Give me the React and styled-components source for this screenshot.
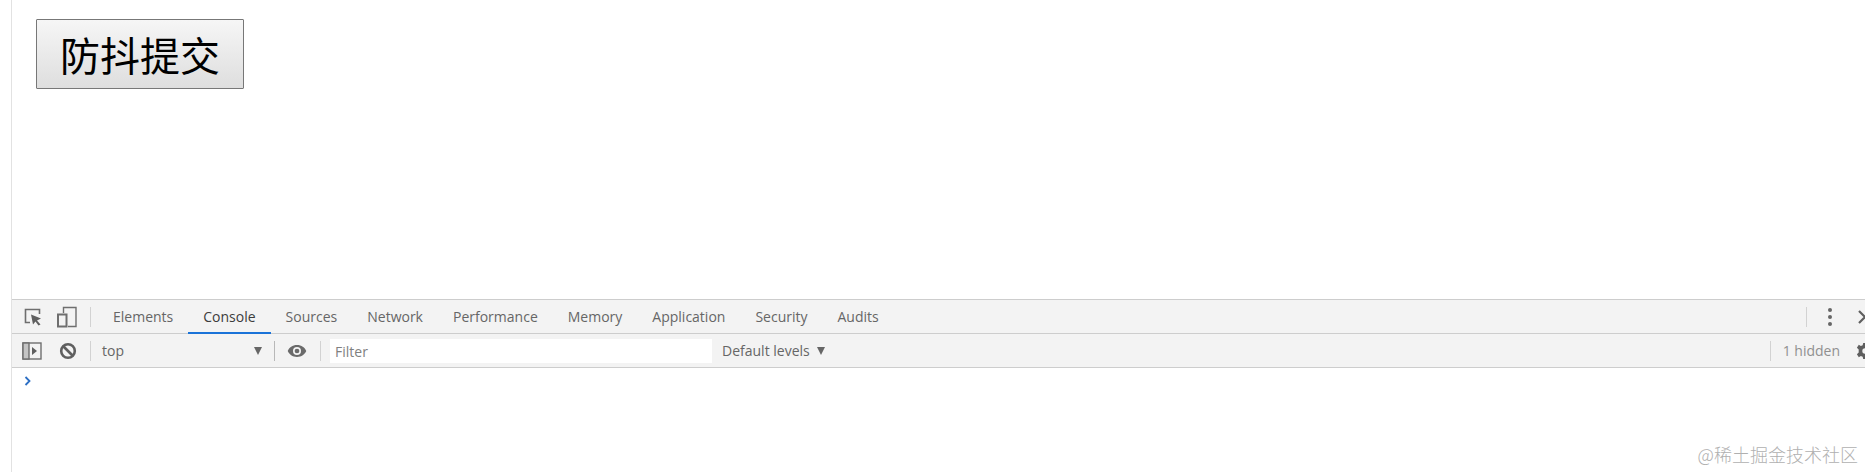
import React from 'react';
import styled, { createGlobalStyle } from 'styled-components';

const GlobalStyle = createGlobalStyle`
	html, body {
		margin: 0;
		padding: 0;
		background: #fff;
		overflow: hidden;
	}
	* {
		box-sizing: border-box;
	}
	svg {
		flex-shrink: 0;
	}
`;

const TABS = ['Elements', 'Console', 'Sources', 'Network', 'Performance', 'Memory', 'Application', 'Security', 'Audits'];

const App = () => {
	return (
		<Window>
			<GlobalStyle />
			<Gutter />
			<Main>
				<Viewport>
					<DebounceButton>防抖提交</DebounceButton>
				</Viewport>
				<TabBar>
					<IconSlot $width={38} $ml={2}>
						<svg width="20" height="20" viewBox="0 0 20 20" fill="none">
							<path d="M7 15.5H2.5V2.5H16.5V7" stroke="#6e6e6e" strokeWidth="1.6" />
							<path d="M8 7.5L18 11.5L14 13.5L17.5 17.5L15.5 18.5L12.5 14.5L10 17.5Z" fill="#5f5f5f" />
						</svg>
					</IconSlot>
					<IconSlot $width={30}>
						<svg width="22" height="22" viewBox="0 0 22 22" fill="none">
							<path d="M7.5 7V1.5H20V20.5H12" stroke="#6e6e6e" strokeWidth="1.4" />
							<rect x="2" y="8.5" width="8.5" height="12" stroke="#6e6e6e" strokeWidth="2" />
						</svg>
					</IconSlot>
					<Divider $ml={8} $mr={7} />
					{TABS.map((tab) => (
						<Tab key={tab} $active={tab === 'Console'}>
							{tab}
						</Tab>
					))}
					<Spacer />
					<Divider />
					<MoreDots>
						<i />
						<i />
						<i />
					</MoreDots>
					<CloseIcon>
						<svg width="18" height="14" viewBox="0 0 18 14" fill="none">
							<path d="M3 1L15 13M15 1L3 13" stroke="#5f5f5f" strokeWidth="2.2" />
						</svg>
					</CloseIcon>
				</TabBar>
				<Toolbar>
					<IconSlot $width={20} $ml={10}>
						<svg width="20" height="18" viewBox="0 0 20 18" fill="none">
							<rect x="1" y="1" width="18" height="16" stroke="#6e6e6e" strokeWidth="1.4" />
							<rect x="1" y="1" width="6" height="16" fill="#c4c4c4" stroke="#6e6e6e" strokeWidth="1.4" />
							<path d="M10 5L15 9L10 13Z" fill="#5f5f5f" />
						</svg>
					</IconSlot>
					<IconSlot $width={20} $ml={16}>
						<svg width="18" height="18" viewBox="0 0 18 18" fill="none">
							<circle cx="9" cy="9" r="6.8" stroke="#5f5f5f" strokeWidth="2.6" />
							<path d="M4.5 4.5L13.5 13.5" stroke="#5f5f5f" strokeWidth="2.6" />
						</svg>
					</IconSlot>
					<Divider $ml={12} $mr={11} />
					<ContextSelect>
						<span>top</span>
						<Arrow />
					</ContextSelect>
					<Divider $dark />
					<IconSlot $width={20} $ml={12}>
						<svg width="20" height="14" viewBox="0 0 22 14">
							<path
								fillRule="evenodd"
								d="M11 0.5C6 0.5 2.4 3.4 0.8 7C2.4 10.6 6 13.5 11 13.5C16 13.5 19.6 10.6 21.2 7C19.6 3.4 16 0.5 11 0.5ZM11 11.4A4.4 4.4 0 1 1 11 2.6A4.4 4.4 0 0 1 11 11.4ZM11 4.4A2.6 2.6 0 1 0 11 9.6A2.6 2.6 0 0 0 11 4.4Z"
								fill="#6a6a6a"
							/>
						</svg>
					</IconSlot>
					<Divider $ml={13} $mr={9} />
					<FilterBox>Filter</FilterBox>
					<LevelsButton>
						<span>Default levels</span>
						<Arrow />
					</LevelsButton>
					<Spacer />
					<Divider />
					<HiddenCount>1 hidden</HiddenCount>
					<GearIcon>
						<svg width="18" height="18" viewBox="0 0 20 20">
							<path
								fillRule="evenodd"
								d="M8 1H12L12.6 3.6L14.6 4.5L16.9 3.1L19 6.4L17 8.2V11.8L19 13.6L16.9 16.9L14.6 15.5L12.6 16.4L12 19H8L7.4 16.4L5.4 15.5L3.1 16.9L1 13.6L3 11.8V8.2L1 6.4L3.1 3.1L5.4 4.5L7.4 3.6ZM10 7A3 3 0 1 0 10 13A3 3 0 0 0 10 7Z"
								fill="#5f5f5f"
							/>
						</svg>
					</GearIcon>
				</Toolbar>
				<ConsoleArea>
					<svg width="8" height="10" viewBox="0 0 8 10" fill="none">
						<path d="M1.5 1L5.5 5L1.5 9" stroke="#2d6fc4" strokeWidth="1.8" />
					</svg>
				</ConsoleArea>
			</Main>
			<Watermark>@稀土掘金技术社区</Watermark>
		</Window>
	);
};

export default App;

const UI_FONT = `'Open Sans', 'Noto Sans', 'Liberation Sans', sans-serif`;

const Window = styled.div`
	position: relative;
	display: flex;
	width: 1865px;
	height: 472px;
	overflow: hidden;
	background: #fff;
`;

const Gutter = styled.div`
	flex: 0 0 12px;
	border-right: 1px solid #e2e2e2;
`;

const Main = styled.div`
	flex: 1;
	min-width: 0;
	display: flex;
	flex-direction: column;
`;

const Viewport = styled.div`
	height: 299px;
	padding: 19px 24px;
`;

const DebounceButton = styled.button`
	display: block;
	width: 208px;
	height: 70px;
	padding: 0;
	border: 1px solid #777;
	border-radius: 1px;
	background: linear-gradient(#f6f6f6, #dedede);
	color: #000;
	font-family: 'Noto Sans CJK SC', sans-serif;
	font-size: 40px;
	font-weight: 400;
	line-height: 1;
`;

const TabBar = styled.div`
	display: flex;
	align-items: center;
	height: 35px;
	background: #f3f3f3;
	border-top: 1px solid #cdcdcd;
	border-bottom: 1px solid #cdcdcd;
	white-space: nowrap;
`;

const Toolbar = styled.div`
	display: flex;
	align-items: center;
	height: 34px;
	background: #f3f3f3;
	border-bottom: 1px solid #cdcdcd;
	white-space: nowrap;
`;

const IconSlot = styled.div`
	flex: 0 0 ${(p) => p.$width}px;
	margin-left: ${(p) => p.$ml || 0}px;
	display: flex;
	align-items: center;
	justify-content: center;
`;

const Divider = styled.div`
	flex: 0 0 1px;
	height: 20px;
	margin-left: ${(p) => p.$ml || 0}px;
	margin-right: ${(p) => p.$mr || 0}px;
	background: ${(p) => (p.$dark ? '#b8b8b8' : '#d2d2d2')};
`;

const Tab = styled.div`
	display: flex;
	align-items: center;
	height: 33px;
	margin-bottom: -1px;
	padding: 1px 15px 0;
	border-bottom: 2px solid ${(p) => (p.$active ? '#1a73d8' : 'transparent')};
	color: ${(p) => (p.$active ? '#3c3c3c' : '#666')};
	font-family: ${UI_FONT};
	font-size: 14px;
`;

const Spacer = styled.div`
	flex: 1;
`;

const MoreDots = styled.div`
	flex: 0 0 auto;
	display: flex;
	flex-direction: column;
	gap: 3px;
	margin: 0 24px 0 21px;
	& > i {
		display: block;
		width: 4px;
		height: 4px;
		border-radius: 50%;
		background: #666;
	}
`;

const CloseIcon = styled.div`
	flex: 0 0 9px;
	overflow: hidden;
	display: flex;
`;

const ContextSelect = styled.div`
	flex: 0 0 172px;
	display: flex;
	align-items: center;
	justify-content: space-between;
	padding-right: 12px;
	color: #666;
	font-family: ${UI_FONT};
	font-size: 14px;
`;

const Arrow = styled.i`
	display: block;
	width: 0;
	height: 0;
	border-left: 4.5px solid transparent;
	border-right: 4.5px solid transparent;
	border-top: 8px solid #666;
`;

const FilterBox = styled.div`
	flex: 0 0 382px;
	height: 24px;
	padding-left: 5px;
	background: #fff;
	color: #808080;
	font-family: ${UI_FONT};
	font-size: 14px;
	line-height: 25px;
`;

const LevelsButton = styled.div`
	display: flex;
	align-items: center;
	gap: 7px;
	margin-left: 10px;
	color: #666;
	font-family: ${UI_FONT};
	font-size: 14px;
`;

const HiddenCount = styled.div`
	margin-left: 12px;
	color: #909090;
	font-family: ${UI_FONT};
	font-size: 14px;
`;

const GearIcon = styled.div`
	flex: 0 0 9px;
	margin-left: 16px;
	overflow: hidden;
	display: flex;
`;

const ConsoleArea = styled.div`
	flex: 1;
	padding: 8px 0 0 12px;
	background: #fff;
	line-height: 0;
`;

const Watermark = styled.div`
	position: absolute;
	right: 7px;
	bottom: 6px;
	color: #b0b0b0;
	font-family: 'Noto Sans CJK SC', sans-serif;
	font-size: 18px;
	font-weight: 300;
	line-height: 1.2;
`;
